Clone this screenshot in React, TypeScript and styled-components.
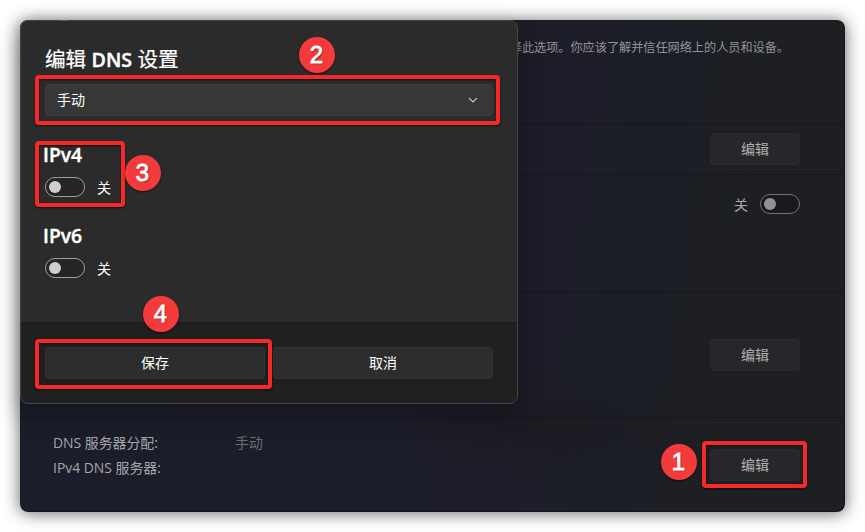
import React from 'react';
import styled, { createGlobalStyle } from 'styled-components';

const GlobalStyle = createGlobalStyle`
  * { box-sizing: border-box; }
  body {
    margin: 0;
    background: #fff;
    overflow: hidden;
    font-family: "Open Sans", "Noto Sans CJK SC", sans-serif;
    font-size: 14px;
    line-height: 20px;
  }
`;

const Page = styled.main`
  width: 865px;
  height: 532px;
  padding: 20px;
`;

const Window = styled.section`
  position: relative;
  display: flex;
  flex-direction: column;
  width: 825px;
  height: 492px;
  border-radius: 8px;
  color: #a9a9aa;
  background:
    radial-gradient(ellipse 150px 60px at 520px 405px, rgba(26, 27, 29, 0.6), rgba(28, 29, 32, 0)),
    linear-gradient(98deg, #1b1d2a 0%, #1c1d29 62%, #1c1e26 74%, #1d1f23 84%, #1e1f22 100%);
  box-shadow: 0 1px 16px 1px rgba(0, 0, 0, 0.55), inset -1px -1px 0 #15161a;
`;

const Row = styled.div<{ $height: number; $top: number; $last?: boolean }>`
  display: flex;
  flex: none;
  justify-content: space-between;
  align-items: flex-start;
  height: ${(p) => p.$height}px;
  padding: ${(p) => p.$top}px 45px 0 33px;
  border-bottom: ${(p) => (p.$last ? 'none' : '1px solid #15161b')};
`;

const Hint = styled.p`
  flex: 1;
  margin: 0 11px 0 0;
  text-align: right;
  font-size: 12.15px;
  line-height: 18px;
  color: #949497;
`;

const End = styled.div<{ $offset?: number }>`
  position: relative;
  display: flex;
  align-items: center;
  gap: 12px;
  margin-top: ${(p) => p.$offset ?? 0}px;
  margin-left: auto;
`;

const EditButton = styled.button`
  width: 90px;
  height: 32px;
  padding: 0;
  border: 1px solid #2b2b2f;
  border-radius: 4px;
  background: #27272b;
  color: #b1b1b1;
  font: inherit;
`;

const Details = styled.dl`
  display: grid;
  grid-template-columns: 182px 1fr;
  row-gap: 5px;
  margin: 0;
  font-size: 13.9px;

  dt { color: #a6a6aa; white-space: nowrap; }
  dd { margin: 0; color: #6d6d73; }
`;

const Track = styled.span<{ $dim?: boolean }>`
  display: flex;
  align-items: center;
  width: 40px;
  height: 20px;
  padding-left: 3px;
  border: 1px solid ${(p) => (p.$dim ? '#747476' : '#9f9f9f')};
  border-radius: 10px;
  background: ${(p) => (p.$dim ? '#191a1d' : '#252525')};

  &::before {
    content: "";
    width: 12px;
    height: 12px;
    border-radius: 50%;
    background: ${(p) => (p.$dim ? '#929292' : '#cecece')};
  }
`;

const ToggleLabel = styled.span`
  padding-top: 2px;
`;

const Dialog = styled.section`
  position: absolute;
  top: 0;
  left: 0;
  display: flex;
  flex-direction: column;
  width: 498px;
  height: 384px;
  border: 1px solid #43454a;
  border-radius: 8px;
  background: #2b2b2b;
  color: #fff;
  box-shadow: 0 12px 24px rgba(5, 6, 15, 0.3);

  &::before {
    content: "";
    position: absolute;
    top: -1px;
    left: 38px;
    width: 9px;
    height: 1px;
    background: #2f6f8c;
  }
`;

const DialogBody = styled.div`
  display: flex;
  flex-direction: column;
  height: 301px;
  padding: 24px 24px 0;
`;

const Title = styled.h1`
  flex: none;
  height: 29px;
  margin: 0;
  font-size: 20.6px;
  font-weight: 400;
  line-height: 28px;
  white-space: nowrap;
  -webkit-text-stroke: 0.2px #fff;

  b {
    font-size: 19.6px;
    font-weight: 600;
    -webkit-text-stroke: 0.4px #fff;
  }
`;

const Select = styled.div`
  position: relative;
  display: flex;
  align-items: center;
  justify-content: space-between;
  height: 32px;
  margin-top: 10px;
  padding: 0 13px 0 11px;
  border: 1px solid #3e3e3e;
  border-radius: 4px;
  background: #373737;
`;

const Protocol = styled.div`
  position: relative;
  width: 80px;
  height: 55px;
  margin-top: 26px;
`;

const ProtocolName = styled.h2`
  margin: 0 0 0 -2px;
  font-size: 19.3px;
  font-weight: 600;
  line-height: 26px;
  -webkit-text-stroke: 0.4px #fff;
`;

const ToggleLine = styled.div`
  display: flex;
  align-items: center;
  gap: 12px;
  margin-top: 9px;
  height: 20px;
`;

const Footer = styled.footer`
  display: flex;
  flex: 1;
  gap: 8px;
  padding: 24px;
  border-top: 1px solid #1b1b1b;
  border-radius: 0 0 7px 7px;
  background: #202020;
`;

const Action = styled.button`
  position: relative;
  flex: 1;
  height: 32px;
  padding: 0;
  border: 1px solid #333;
  border-radius: 4px;
  background: #2d2d2d;
  color: #fff;
  font: inherit;
`;

const Frame = styled.span<{ $inset: string }>`
  position: absolute;
  z-index: 1;
  inset: ${(p) => p.$inset};
  border: 4px solid #f62828;
  border-radius: 4px;
  box-shadow: 0 1px 2px rgba(0, 0, 0, 0.75), inset 0 1px 2px rgba(0, 0, 0, 0.75);
`;

const Badge = styled.span<{ $x: number; $y: number }>`
  position: absolute;
  z-index: 2;
  left: ${(p) => p.$x}px;
  top: ${(p) => p.$y}px;
  width: 36px;
  height: 36px;
  padding-right: 1px;
  border-radius: 50%;
  background: #f33b3b;
  color: #fff;
  text-align: center;
  font: 24px/36px "Liberation Sans", sans-serif;
  -webkit-text-stroke: 0.8px #fff;
  text-shadow: 1px 1px 1px rgba(0, 0, 0, 0.55);
  box-shadow: 0 1px 2px rgba(0, 0, 0, 0.6);
`;

const Chevron = () => (
  <svg width="12" height="12" viewBox="0 0 12 12" fill="none" stroke="#cfcfcf" strokeWidth="1.15" strokeLinecap="round" strokeLinejoin="round">
    <path d="M2.3 4.4 6 7.8 9.7 4.4" />
  </svg>
);

const ProtocolToggle = ({ name, children }: { name: string; children?: React.ReactNode }) => (
  <Protocol>
    <ProtocolName>{name}</ProtocolName>
    <ToggleLine>
      <Track />
      <ToggleLabel>关</ToggleLabel>
    </ToggleLine>
    {children}
  </Protocol>
);

export default function App() {
  return (
    <Page>
      <GlobalStyle />
      <Window>
        <Row $height={104} $top={19}>
          <Hint>择此选项。你应该了解并信任网络上的人员和设备。</Hint>
        </Row>
        <Row $height={51} $top={9}>
          <End><EditButton>编辑</EditButton></End>
        </Row>
        <Row $height={118} $top={18}>
          <End>
            <ToggleLabel>关</ToggleLabel>
            <Track $dim />
          </End>
        </Row>
        <Row $height={125} $top={46}>
          <End><EditButton>编辑</EditButton></End>
        </Row>
        <Row $height={94} $top={15} $last>
          <Details>
            <dt>DNS 服务器分配:</dt>
            <dd>手动</dd>
            <dt>IPv4 DNS 服务器:</dt>
          </Details>
          <End $offset={16}>
            <EditButton>编辑</EditButton>
            <Frame $inset="-8px -7px -7px -8px" />
            <Badge $x={-49} $y={-5}>1</Badge>
          </End>
        </Row>

        <Dialog>
          <DialogBody>
            <Title>编辑 <b>DNS</b> 设置</Title>
            <Select>
              <span>手动</span>
              <Chevron />
              <Frame $inset="-10px -8px -10px -11px" />
              <Badge $x={253} $y={-48}>2</Badge>
            </Select>
            <ProtocolToggle name="IPv4">
              <Frame $inset="-1px 0 -10px -10px" />
              <Badge $x={80} $y={13}>3</Badge>
            </ProtocolToggle>
            <ProtocolToggle name="IPv6" />
          </DialogBody>
          <Footer>
            <Action>
              保存
              <Frame $inset="-9px -8px -11px -11px" />
              <Badge $x={97} $y={-52}>4</Badge>
            </Action>
            <Action>取消</Action>
          </Footer>
        </Dialog>
      </Window>
    </Page>
  );
}
